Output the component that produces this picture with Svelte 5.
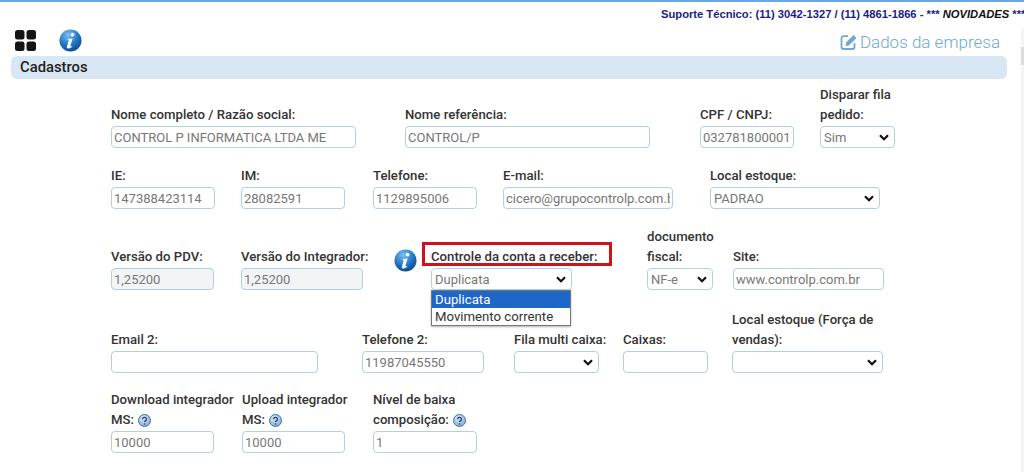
<script>
  const rows = [
    { h: 0, fields: [
      { label: 'Nome completo / Razão social:', value: 'CONTROL P INFORMATICA LTDA ME', step: 294, w: 245 },
      { label: 'Nome referência:', value: 'CONTROL/P', step: 295, w: 245 },
      { label: 'CPF / CNPJ:', value: '032781800001', step: 120, w: 94 },
      { label: 'Disparar fila pedido:', select: ['Sim'], step: 100, w: 75, lw: 80 }
    ]},
    { fields: [
      { label: 'IE:', value: '147388423114', step: 130, w: 104 },
      { label: 'IM:', value: '28082591', step: 132, w: 104 },
      { label: 'Telefone:', value: '1129895006', step: 130, w: 104 },
      { label: 'E-mail:', value: 'cicero@grupocontrolp.com.br', step: 207, w: 170 },
      { label: 'Local estoque:', select: ['PADRAO'], step: 180, w: 170 }
    ]},
    { fields: [
      { label: 'Versão do PDV:', value: '1,25200', step: 130, w: 103, off: true },
      { label: 'Versão do Integrador:', value: '1,25200', step: 190, w: 122, off: true, info: true },
      { label: 'Controle da conta a receber:', select: ['Duplicata', 'Movimento corrente'], step: 216, w: 141, open: true },
      { label: 'documento fiscal:', select: ['NF-e'], step: 86, w: 66, lw: 70 },
      { label: 'Site:', value: 'www.controlp.com.br', step: 160, w: 151 }
    ]},
    { fields: [
      { label: 'Email 2:', value: '', step: 251, w: 207 },
      { label: 'Telefone 2:', value: '11987045550', step: 152, w: 122 },
      { label: 'Fila multi caixa:', select: [''], step: 109, w: 85 },
      { label: 'Caixas:', value: '', step: 109, w: 85 },
      { label: 'Local estoque (Força de vendas):', select: [''], step: 160, w: 151, lw: 160 }
    ]},
    { fields: [
      { label: 'Download integrador', tail: 'MS:', value: '10000', step: 131, w: 103, lw: 128 },
      { label: 'Upload integrador', tail: 'MS:', value: '10000', step: 131, w: 103, lw: 120 },
      { label: 'Nível de baixa', tail: 'composição:', value: '1', step: 130, w: 104, lw: 110 }
    ]}
  ];
</script>

{#snippet infoIcon(cls)}
  <svg class={cls} viewBox="0 0 24 24" aria-hidden="true">
    <defs>
      <radialGradient id="ball-{cls}" cx="40%" cy="25%" r="85%">
        <stop offset="0" stop-color="#7cc0f0" />
        <stop offset="0.55" stop-color="#1f74c2" />
        <stop offset="1" stop-color="#0c3f80" />
      </radialGradient>
    </defs>
    <circle cx="12" cy="12" r="11.5" fill="url(#ball-{cls})" />
    <path d="M14.2 3.8a2 2 0 1 1-.1 4 2 2 0 0 1 .1-4ZM9.2 10.4l5-.6-2.3 8c-.1.6.3.7.8.4l1-.7.3.5c-1.3 1.5-2.800 2.300-4.300 2.300-1.500 0-1.700-1-1.400-2.100l1.700-5.800c.1-.5 0-.8-.9-.8Z" fill="#fff" />
  </svg>
{/snippet}

<div class="page">
  <div class="support">Suporte Técnico: (11) 3042-1327 / (11) 4861-1866 - *** <em>NOVIDADES</em> ***</div>

  <div class="tools">
    <svg class="grid-icon" viewBox="0 0 21 21" aria-hidden="true">
      <rect x="0" y="0" width="9.500" height="9.500" rx="2.500" />
      <rect x="11.500" y="0" width="9.500" height="9.500" rx="2.500" />
      <rect x="0" y="11.500" width="9.500" height="9.500" rx="2.500" />
      <rect x="11.500" y="11.500" width="9.500" height="9.500" rx="2.500" />
    </svg>
    {@render infoIcon('tool-info')}
    <div class="title">
      <svg class="edit-icon" viewBox="0 0 18 18" aria-hidden="true">
        <path d="M8 3.200H3.500A2 2 0 0 0 1.500 5.200v8.800a2 2 0 0 0 2 2h9a2 2 0 0 0 2-2V10" fill="none" stroke="currentColor" stroke-width="1.800" />
        <path d="M6 9.500 13.500 2l3 3L9 12.500l-3.500.5Z" fill="currentColor" />
      </svg>
      Dados da empresa
    </div>
  </div>

  <div class="band">Cadastros</div>

  <div class="form">
    {#each rows as row}
      <div class="row">
        {#each row.fields as f}
          <div class="field" style="width:{f.step}px">
            <div class="label-wrap" style="width:{f.lw ?? f.step - 2}px">
              <div>{f.label}</div>
              {#if f.tail}
                <div class="tail"><span>{f.tail}</span><svg class="help" viewBox="0 0 13 13" aria-hidden="true">
                  <defs>
                    <radialGradient id="help-ball" cx="40%" cy="30%" r="75%">
                      <stop offset="0" stop-color="#dbe9f7" />
                      <stop offset="1" stop-color="#7faad8" />
                    </radialGradient>
                  </defs>
                  <circle cx="6.500" cy="6.500" r="6" fill="url(#help-ball)" stroke="#3f6ea8" />
                  <path d="M4.600 5.200a1.900 1.900 0 1 1 2.800 1.700c-.6.300-.9.600-.9 1.200" fill="none" stroke="#1d3f73" stroke-width="1.300" />
                  <circle cx="6.500" cy="10" r=".8" fill="#1d3f73" />
                </svg></div>
              {/if}
            </div>
            {#if f.select}
              <select class="ctl sel" style="width:{f.w}px">
                {#each f.select as o}<option>{o}</option>{/each}
              </select>
            {:else}
              <input class="ctl" class:off={f.off} style="width:{f.w}px" value={f.value} />
            {/if}
            {#if f.info}{@render infoIcon('field-info')}{/if}
            {#if f.open}
              <div class="marker"></div>
              <div class="drop">
                <div class="opt on">Duplicata</div>
                <div class="opt">Movimento corrente</div>
              </div>
            {/if}
          </div>
        {/each}
      </div>
    {/each}
  </div>
  <div class="scroll"><div class="thumb"></div></div>
</div>

<style>
  :global(body) { margin: 0; background: #fff; }
  .page {
    position: relative;
    width: 1024px;
    height: 472px;
    overflow: hidden;
    box-sizing: border-box;
    border-top: 2px solid #6ba6e2;
    font-family: Roboto, "Liberation Sans", sans-serif;
    color: #222;
  }
  .support {
    height: 24px;
    padding: 5px 0 0 661px;
    box-sizing: border-box;
    font: bold 11.200px/14px "Liberation Sans", sans-serif;
    color: #1c1c86;
    white-space: nowrap;
  }
  .support em { color: #111; }
  .tools {
    display: flex;
    align-items: center;
    height: 28px;
    padding-left: 15px;
  }
  .grid-icon { width: 21px; height: 21px; fill: #141414; }
  :global(.tool-info) { width: 23px; height: 23px; margin-left: 23px; }
  :global(.field-info) { position: absolute; left: 153px; bottom: 18px; width: 23px; height: 23px; }
  .title {
    margin-left: auto;
    margin-right: 24px;
    margin-top: 4px;
    display: flex;
    align-items: center;
    gap: 2px;
    font-size: 17px;
    font-weight: 300;
    color: #6fa8d4;
  }
  .edit-icon { width: 18px; height: 18px; }
  .band {
    height: 23px;
    margin: 2px 17px 0 11px;
    padding-left: 9px;
    background: #d9e6f3;
    border-radius: 6px;
    font-size: 14.800px;
    font-weight: 500;
    line-height: 22px;
    color: #222;
  }
  .form { padding: 5px 0 0 111px; display: flex; flex-direction: column; }
  .row { display: flex; align-items: flex-end; margin-bottom: 17px; white-space: nowrap; }
  .row:nth-child(3) { margin-bottom: 19px; }
  .row:nth-child(4) { margin-bottom: 16px; }
  .field { position: relative; flex: none; }
  .label-wrap {
    font-size: 13.200px;
    font-weight: 500;
    line-height: 20px;
    padding-top: 1px;
    margin-bottom: 1px;
    white-space: normal;
    color: #333;
  }
  .tail { display: flex; align-items: center; gap: 4px; }
  .help { width: 13px; height: 13px; flex: none; }
  .ctl {
    display: block;
    height: 22px;
    box-sizing: border-box;
    border: 1px solid #b0d0e2;
    border-radius: 4px;
    background: #fff;
    padding: 0 2px;
    font: 13px Roboto, sans-serif;
    color: #777;
    outline: none;
  }
  .sel {
    appearance: none;
    padding-left: 3px;
    background: #fff url("data:image/svg+xml,%3Csvg xmlns='http://www.w3.org/2000/svg' width='10' height='7'%3E%3Cpath d='M1 1.200 5 5.200 9 1.200' fill='none' stroke='%23111' stroke-width='2.200'/%3E%3C/svg%3E") no-repeat right 5px center;
  }
  .off { background: #f2f4f6; }
  .marker {
    position: absolute;
    left: -9px;
    top: -4px;
    width: 184px;
    height: 18px;
    border: 3px solid #d0121b;
    box-sizing: content-box;
    pointer-events: none;
  }
  .drop {
    position: absolute;
    left: 0;
    top: 44px;
    width: 140px;
    box-sizing: border-box;
    background: #fff;
    border: 1px solid #767676;
    box-shadow: 0 1px 2px rgba(0,0,0,.3);
    font-size: 13.200px;
    line-height: 17px;
    color: #333;
  }
  .opt { padding-left: 3px; }
  .on { background: #1e66c8; color: #fff; }
  .scroll {
    position: absolute;
    right: 0;
    top: 26px;
    bottom: 0;
    width: 3px;
    background: #f5f5f5;
  }
  .thumb { width: 3px; height: 18px; margin-top: 19px; background: #dcdcdc; }
</style>
